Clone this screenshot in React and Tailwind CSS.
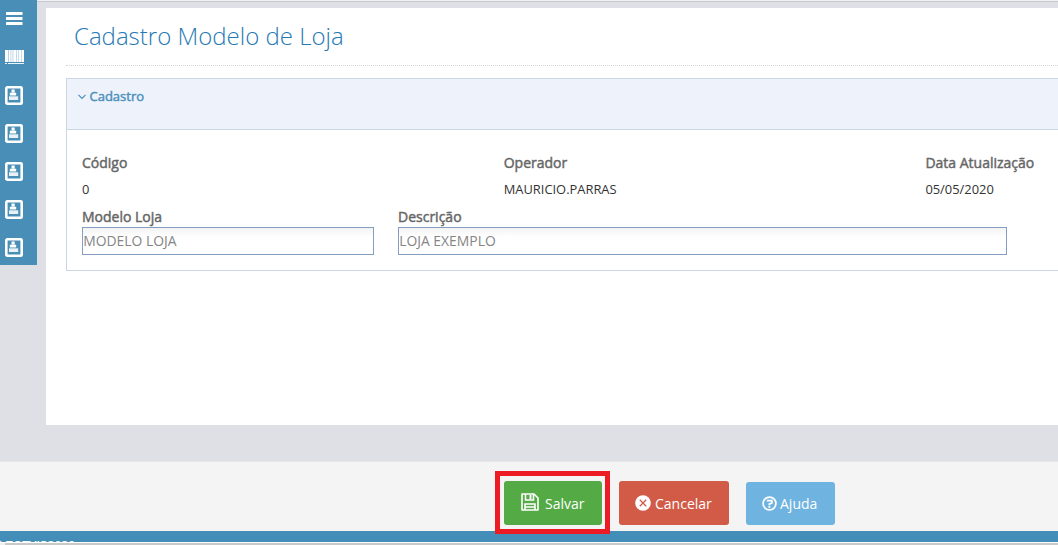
const menuItems = [1, 2, 3, 4, 5];

function MenuIcon() {
  return (
    <svg width="17" height="13" viewBox="0 0 17 13" fill="#fff">
      <rect width="16.5" height="3" rx="0.5" />
      <rect y="5" width="16.5" height="3" rx="0.5" />
      <rect y="10" width="16.5" height="3" rx="0.5" />
    </svg>
  );
}

function BarcodeIcon() {
  return (
    <svg width="19" height="14" viewBox="0 0 19 14" fill="#fff">
      <path d="M0 0h3v12H0zM4 0h1.5v12H4zM6.3 0h1.2v12H6.3zM8.3 0h2.9v12H8.3zM12 0h1.2v12H12zM14 0h2v12h-2zM16.8 0H19v12h-2.2z" />
      <path d="M0 0h19v12H0z" fillOpacity="0.6" />
      <path d="M0 13h2v1H0zM3 13h16v1H3z" fillOpacity="0.9" />
    </svg>
  );
}

function ContactIcon() {
  return (
    <svg width="18" height="19" viewBox="0 0 18 19" fill="none">
      <rect x="1.3" y="1.3" width="15.4" height="16.4" rx="1" stroke="#fff" strokeWidth="2.6" />
      <path d="M6.5 3.5h3.2v3H6.5zM4.8 6.8h6.4v2.7H4.8z" fill="#fff" />
      <path d="M4 10.3h9.2V14H4z" fill="#fff" fillOpacity="0.88" />
    </svg>
  );
}

function SaveIcon() {
  return (
    <svg width="18" height="18" viewBox="0 0 18 18" fill="none" stroke="#fff" strokeWidth="1.6">
      <path d="M1 1h12l4 4v12H1z" strokeLinejoin="round" />
      <path d="M4.5 1v6h8V1M4 17v-6h10v6M4 14h10" />
      <path d="M9.5 2v4" strokeWidth="2" />
    </svg>
  );
}

function CancelIcon() {
  return (
    <svg width="16" height="16" viewBox="0 0 16 16" fill="none">
      <circle cx="8" cy="8" r="7.8" fill="#fff" />
      <path d="M4.8 4.8l6.4 6.4M11.2 4.8l-6.4 6.4" stroke="#d15b47" strokeWidth="1.3" />
    </svg>
  );
}

function HelpIcon() {
  return (
    <svg width="15" height="15" viewBox="0 0 15 15" fill="none" stroke="#fff">
      <circle cx="7.5" cy="7.5" r="6.4" strokeWidth="1.8" />
      <path d="M4.8 4.6h5v2.2L7.4 8v1.3" strokeWidth="1.9" />
      <path d="M7.4 10v1.8" strokeWidth="1.9" />
    </svg>
  );
}

function Label({ children }) {
  return (
    <div className="whitespace-nowrap text-[14px] leading-5 text-[#666] [-webkit-text-stroke:0.45px_#666]">
      {children}
    </div>
  );
}

function Info({ label, value }) {
  return (
    <div className="w-[421.7px] shrink-0">
      <Label>{label}</Label>
      <div className="mt-1.5 mb-px text-[12.9px] leading-5 text-[#333]">{value}</div>
    </div>
  );
}

function Field({ label, value, className }) {
  return (
    <div className={className}>
      <Label>{label}</Label>
      <input
        type="text"
        defaultValue={value}
        className="block h-7 w-full border border-[#859dbf] bg-linear-to-b from-[#f3f3f3] to-white to-35% pb-0.5 pl-[0.2px] text-[13.9px] text-[#858585] outline-none"
      />
    </div>
  );
}

export default function App() {
  return (
    <div className="flex h-[545px] w-[1058px] flex-col overflow-hidden bg-[#dfe0e5] font-['Open_Sans',sans-serif]">
      <div className="flex h-[461px] shrink-0">
        {/* Sidebar */}
        <nav className="flex h-[265px] w-[37px] shrink-0 flex-col bg-[#488eb7] text-white">
          <div className="flex h-[37px] shrink-0 items-center pl-[6px]">
            <MenuIcon />
          </div>
          <div className="flex h-10 shrink-0 items-start pt-[13px] pl-[5px]">
            <BarcodeIcon />
          </div>
          {menuItems.map((item) => (
            <div key={item} className="flex h-[38px] shrink-0 items-start pt-[9px] pl-[5px]">
              <ContactIcon />
            </div>
          ))}
        </nav>

        <div className="flex-1 overflow-hidden border-t border-[#f0f0f2]">
          <div className="h-[7px] border-t border-[#c8c9cc]" />
          <main className="ml-[9px] h-[417px] bg-white pl-5">
            <h1 className="h-[58px] border-b border-dotted border-[#d5d5d5] pt-2 pl-2 text-[24px] leading-10 font-light text-[#2679b5]">
              Cadastro Modelo de Loja
            </h1>

            {/* Painel */}
            <section className="mt-3 h-[193px] w-[1000px] border border-[#ccd6e4]">
              <header className="flex h-[51px] items-start border-b border-[#ccd6e4] bg-[#eef3fb] pt-[7px] pl-[10.5px] text-[#4c8fbd]">
                <svg width="8" height="6" viewBox="0 0 8 6" className="mt-2" fill="none" stroke="currentColor" strokeWidth="1.2">
                  <path d="M0.5 0.8L4 4.5L7.5 0.8" />
                </svg>
                <span className="ml-1 text-[13px] leading-5 [-webkit-text-stroke:0.45px_#4c8fbd]">Cadastro</span>
              </header>
              <div className="pt-[23px] pl-[15px]">
                <div className="flex">
                  <Info label="Código" value="0" />
                  <Info label="Operador" value="MAURICIO.PARRAS" />
                  <Info label="Data Atualização" value="05/05/2020" />
                </div>
                <div className="mt-[7px] flex gap-6">
                  <Field label="Modelo Loja" value="MODELO LOJA" className="w-[292px]" />
                  <Field label="Descrição" value="LOJA EXEMPLO" className="w-[609px]" />
                </div>
              </div>
            </section>
          </main>
        </div>
      </div>

      {/* Ações */}
      <div className="flex h-[70px] shrink-0 border-t border-[#e5e5e5] bg-[#f4f4f4] pl-[495px] text-[14px] text-white [text-shadow:0_-1px_0_rgba(0,0,0,0.25)]">
        <div className="relative z-10 mt-[9px] h-[63px] w-[115px] border-5 border-[#ed1c24] bg-[#f4f4f4] pt-[5px] pl-1">
          <button className="flex h-11 w-[98px] items-center rounded-[3px] bg-[#54aa45] pl-[16.5px]">
            <span className="-mt-0.5">
              <SaveIcon />
            </span>
            <span className="ml-[6.5px]">Salvar</span>
          </button>
        </div>
        <button className="mt-[19px] ml-[9px] flex h-11 w-[110px] items-center rounded-[3px] bg-[#d15b47] pl-4">
          <CancelIcon />
          <span className="ml-1">Cancelar</span>
        </button>
        <button className="mt-5 ml-[17px] flex h-[43px] w-[89px] items-center rounded-[3px] bg-[#6fb3e0] pl-4">
          <HelpIcon />
          <span className="ml-[3px]">Ajuda</span>
        </button>
      </div>

      <footer className="h-[11px] shrink-0 overflow-hidden bg-[#438eb9] text-[12px] leading-4 font-semibold whitespace-nowrap text-white">
        <div className="mt-[7px] -ml-[7px]">© TOTVIP2020</div>
      </footer>
      <div className="h-[3px] shrink-0 border-t border-white bg-[#c9c9c9]">
        <div className="h-[2px] w-[5px] bg-[#f0f0f0]" />
      </div>
    </div>
  );
}
